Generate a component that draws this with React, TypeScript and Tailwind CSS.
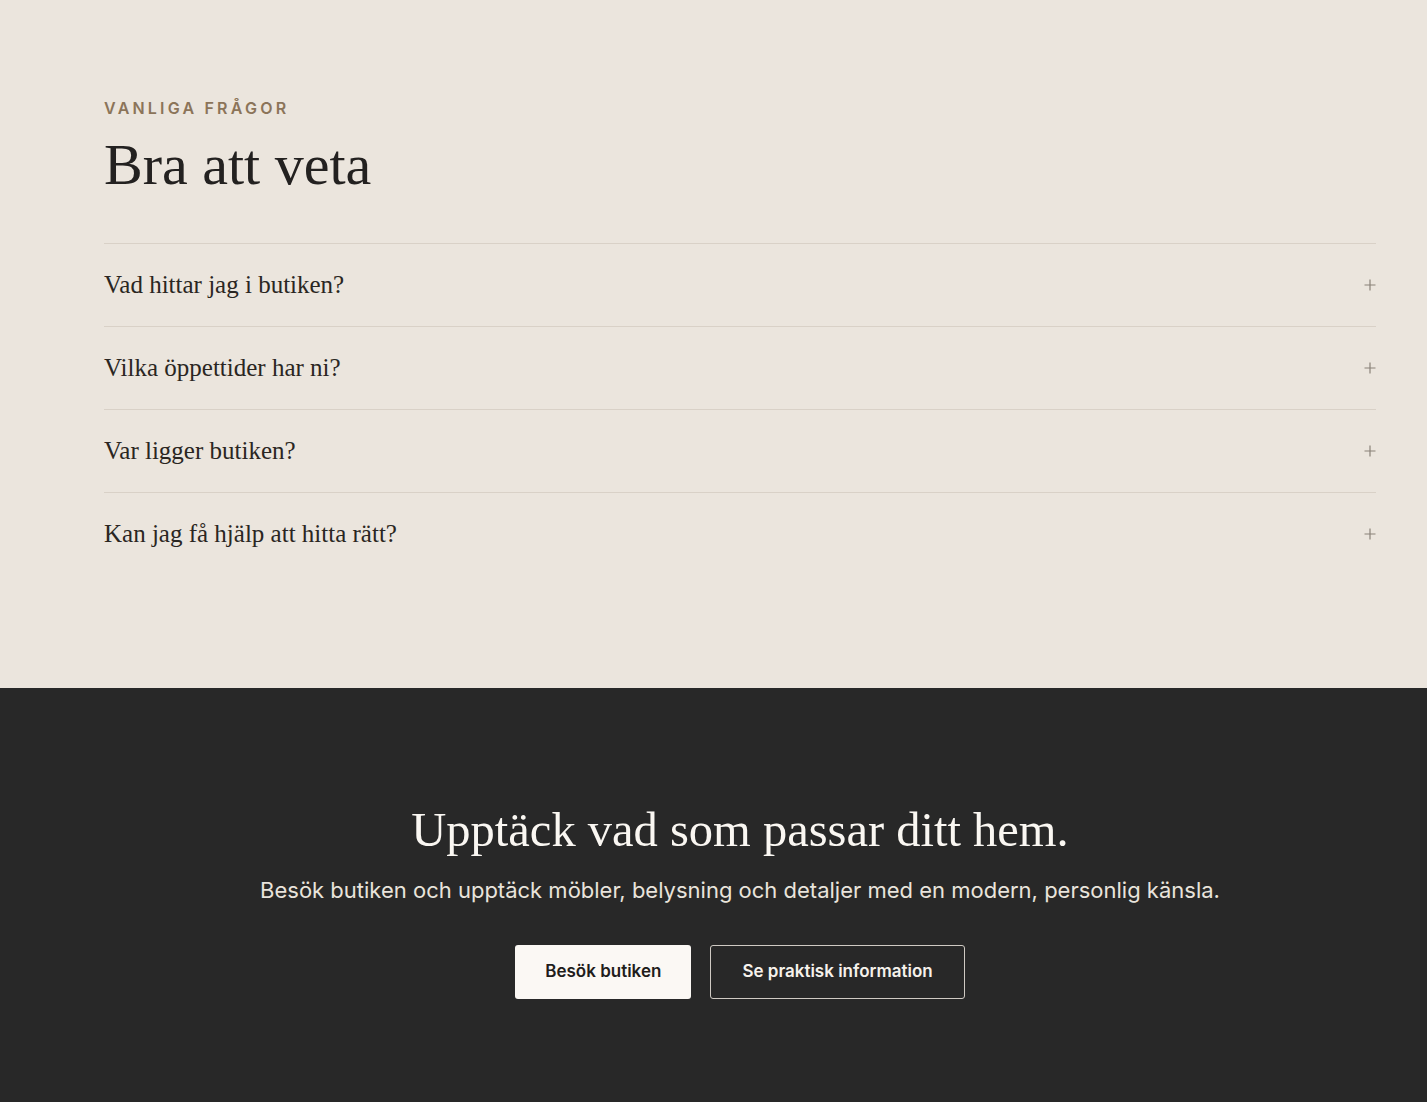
const questions = [
  "Vad hittar jag i butiken?",
  "Vilka öppettider har ni?",
  "Var ligger butiken?",
  "Kan jag få hjälp att hitta rätt?",
];

function PlusIcon() {
  return (
    <svg className="w-[12px] h-[12px] text-[#8a8279]" viewBox="0 0 12 12" fill="none" stroke="currentColor" strokeWidth={1.2}>
      <path d="M6 0.5v11M0.5 6h11" />
    </svg>
  );
}

export default function App() {
  return (
    <div className="min-h-[1102px] bg-[#282828] font-['Inter','Liberation_Sans',sans-serif]">
      {/* FAQ */}
      <section className="bg-[#ebe5dd] pl-[104px] pr-[51px] pt-[98px] pb-[113px]">
        <div className="text-[16px] leading-[20px] font-semibold tracking-[0.2em] text-[#8b7459]">
          VANLIGA FRÅGOR
        </div>
        <h2 className="mt-[15px] text-[58px] leading-[1.1] text-[#232120] font-['Liberation_Serif',serif]">
          Bra att veta
        </h2>
        <div className="mt-[46px]">
          {questions.map((q) => (
            <button
              key={q}
              className="w-full h-[83px] flex items-center justify-between text-left border-t border-[#d9d1c7]"
            >
              <span className="text-[25px] text-[#2a2622] font-['Liberation_Serif',serif]">{q}</span>
              <span>
                <PlusIcon />
              </span>
            </button>
          ))}
        </div>
      </section>

      {/* CTA */}
      <section className="bg-[#282828] pl-[104px] pr-[51px] pt-[113px] pb-[104px] flex flex-col items-center text-center">
        <h2 className="text-[48.5px] leading-[1.2] text-[#faf7f2] font-['Liberation_Serif',serif]">
          Upptäck vad som passar ditt hem.
        </h2>
        <p className="mt-[17px] text-[22px] leading-[28px] text-[#e9e4dc]">
          Besök butiken och upptäck möbler, belysning och detaljer med en modern, personlig känsla.
        </p>
        <div className="mt-[41px] flex gap-[19px]">
          <a className="h-[54px] px-[30px] flex items-center rounded-[3px] bg-[#fbf8f4] text-[17px] font-semibold text-[#1f1d1b]">
            Besök butiken
          </a>
          <a className="h-[54px] px-[31px] flex items-center rounded-[3px] border border-[#cfcac3] text-[17px] font-semibold text-[#f6f2ec]">
            Se praktisk information
          </a>
        </div>
      </section>
    </div>
  );
}
